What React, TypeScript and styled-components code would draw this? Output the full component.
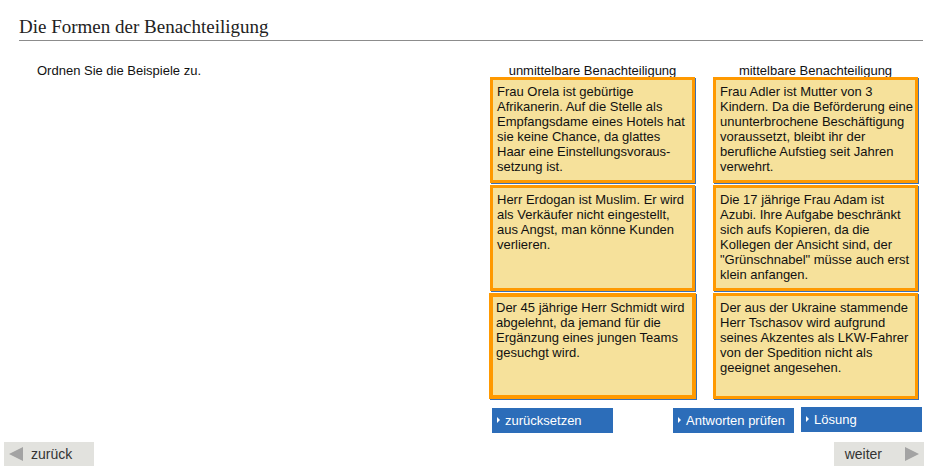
import React from 'react';
import styled, { createGlobalStyle } from 'styled-components';

/* Zuordnungsübung: Formen der Benachteiligung */

const GlobalStyle = createGlobalStyle`
  html, body {
    margin: 0;
    padding: 0;
    background: #ffffff;
  }
  body {
    font-family: "Liberation Sans", Arial, sans-serif;
    font-size: 13px;
    color: #111;
  }
`;

const Seite = styled.div`
  width: 947px;
  height: 473px;
  display: flex;
  flex-direction: column;
  overflow: hidden;
`;

const Titel = styled.h1`
  margin: 0 24px 0 19px;
  padding: 15px 0 1px;
  font-family: "Liberation Serif", "Times New Roman", serif;
  font-weight: normal;
  font-size: 19px;
  line-height: 24px;
  color: #222;
  border-bottom: 1px solid #8c8c8c;
`;

const Hauptbereich = styled.div`
  display: flex;
  margin-top: 22px;
  padding: 0 25px 0 37px;
`;

const Anweisung = styled.div`
  line-height: 15px;
  color: #111;
`;

const Brett = styled.div`
  margin-left: auto;
  width: 432px;
  display: flex;
  flex-direction: column;
`;

const Spalten = styled.div`
  display: flex;
  gap: 18px;
`;

const Spalte = styled.div`
  width: 205px;
  display: flex;
  flex-direction: column;
`;

const Kopf = styled.div`
  height: 14px;
  line-height: 15px;
  text-align: center;
  white-space: nowrap;
  color: #111;
`;

const Karten = styled.div`
  display: flex;
  flex-direction: column;
  gap: 2px;
  position: relative;
  z-index: 1;
`;

const Karte = styled.div<{ $dick?: boolean }>`
  box-sizing: border-box;
  height: 106px;
  background: #f6e19b;
  border: ${p => (p.$dick ? 4 : 3)}px solid #ff9900;
  margin: ${p => (p.$dick ? '0 -1px' : '0')};
  box-shadow: 1px 1px 0 #3b6fb3;
  padding: ${p => (p.$dick ? '3px 1px 3px 3px' : '4px 1px 4px 4px')};
  line-height: 15px;
  color: #111;
  hyphens: manual;
`;

const Knopfleiste = styled.div`
  display: flex;
  gap: 7px;
  margin-top: 9px;
  padding-left: 2px;
`;

const BlauerKnopf = styled.button<{ $hoch?: boolean }>`
  width: 121px;
  height: 25px;
  background: #2c6db9;
  border: none;
  color: #ffffff;
  font-family: "Liberation Sans", Arial, sans-serif;
  font-size: 13px;
  text-align: left;
  padding: 0 0 0 5px;
  display: flex;
  align-items: center;
  gap: 5px;
  cursor: pointer;
  margin-top: ${p => (p.$hoch ? '-1px' : '0')};

  &:first-child {
    margin-right: auto;
  }
`;

const Pfeilchen = styled.span`
  width: 0;
  height: 0;
  border-top: 3px solid transparent;
  border-bottom: 3px solid transparent;
  border-left: 3px solid #ffffff;
  margin-top: -1px;
`;

const Navigation = styled.div`
  display: flex;
  justify-content: space-between;
  margin-top: 9px;
  padding: 0 23px 0 4px;
`;

const NavKnopf = styled.button<{ $rechts?: boolean }>`
  width: 90px;
  height: 24px;
  background: #e2e2de;
  border: none;
  color: #333;
  font-family: "Liberation Sans", Arial, sans-serif;
  font-size: 14px;
  display: flex;
  align-items: center;
  justify-content: ${p => (p.$rechts ? 'flex-end' : 'flex-start')};
  gap: ${p => (p.$rechts ? '23px' : '8px')};
  padding: 0 5px;
  cursor: pointer;
`;

const Dreieck = styled.span<{ $richtung: 'links' | 'rechts' }>`
  width: 0;
  height: 0;
  border-top: 7px solid transparent;
  border-bottom: 7px solid transparent;
  ${p =>
    p.$richtung === 'links'
      ? 'border-right: 14px solid #a3a3a3;'
      : 'border-left: 14px solid #a3a3a3;'}
`;

const links = [
  'Frau Orela ist gebürtige Afrikanerin. Auf die Stelle als Empfangsdame eines Hotels hat sie keine Chance, da glattes Haar eine Einstellungsvoraus\u00ADsetzung ist.',
  'Herr Erdogan ist Muslim. Er wird als Verkäufer nicht eingestellt, aus Angst, man könne Kunden verlieren.',
  'Der 45 jährige Herr Schmidt wird abgelehnt, da jemand für die Ergänzung eines jungen Teams gesuchgt wird.',
];

const rechts = [
  'Frau Adler ist Mutter von 3 Kindern. Da die Beförderung eine ununterbrochene Beschäftigung voraussetzt, bleibt ihr der berufliche Aufstieg seit Jahren verwehrt.',
  'Die 17 jährige Frau Adam ist Azubi. Ihre Aufgabe beschränkt sich aufs Kopieren, da die Kollegen der Ansicht sind, der "Grünschnabel" müsse auch erst klein anfangen.',
  'Der aus der Ukraine stammende Herr Tschasov wird aufgrund seines Akzentes als LKW-Fahrer von der Spedition nicht als geeignet angesehen.',
];

export default function App() {
  return (
    <>
      <GlobalStyle />
      <Seite>
        <Titel>Die Formen der Benachteiligung</Titel>

        <Hauptbereich>
          <Anweisung>Ordnen Sie die Beispiele zu.</Anweisung>

          <Brett>
            <Spalten>
              <Spalte>
                <Kopf>unmittelbare Benachteiligung</Kopf>
                <Karten>
                  {links.map((t, i) => (
                    <Karte key={i} $dick={i === 2}>{t}</Karte>
                  ))}
                </Karten>
              </Spalte>
              <Spalte>
                <Kopf>mittelbare Benachteiligung</Kopf>
                <Karten>
                  {rechts.map((t, i) => (
                    <Karte key={i}>{t}</Karte>
                  ))}
                </Karten>
              </Spalte>
            </Spalten>

            <Knopfleiste>
              <BlauerKnopf><Pfeilchen />zurücksetzen</BlauerKnopf>
              <BlauerKnopf><Pfeilchen />Antworten prüfen</BlauerKnopf>
              <BlauerKnopf $hoch><Pfeilchen />Lösung</BlauerKnopf>
            </Knopfleiste>
          </Brett>
        </Hauptbereich>

        <Navigation>
          <NavKnopf><Dreieck $richtung="links" />zurück</NavKnopf>
          <NavKnopf $rechts>weiter<Dreieck $richtung="rechts" /></NavKnopf>
        </Navigation>
      </Seite>
    </>
  );
}
